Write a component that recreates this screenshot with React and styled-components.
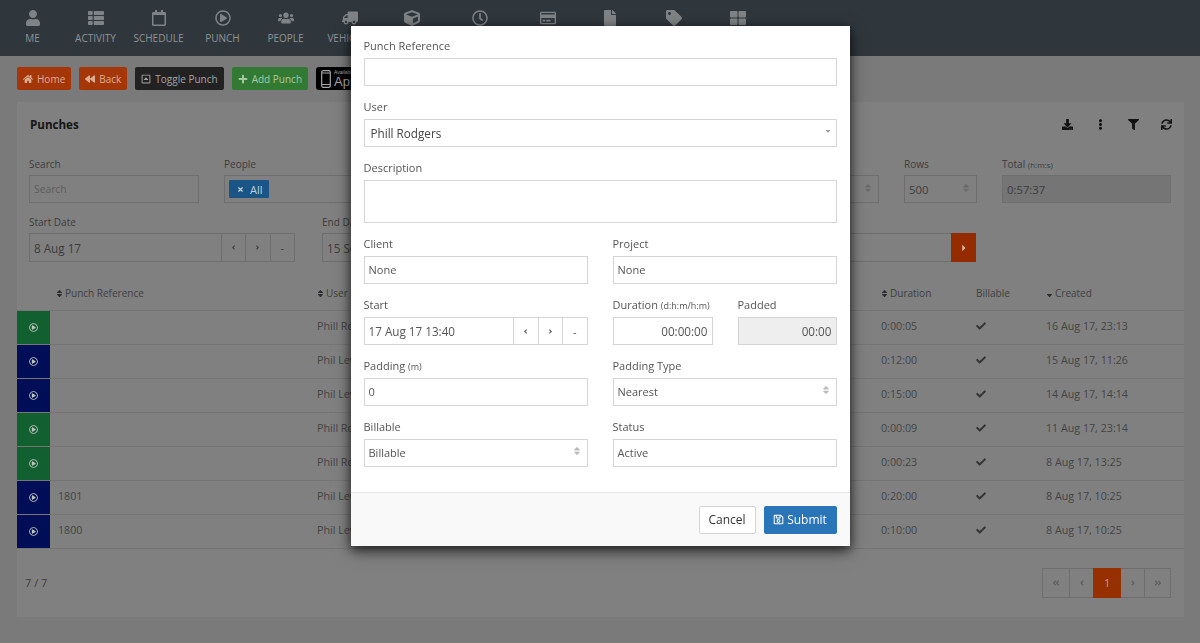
import React from "react";
import styled, { createGlobalStyle } from "styled-components";
import { FaUser, FaThList, FaRegCalendar, FaRegPlayCircle, FaUsers, FaTruck, FaCube, FaRegClock, FaRegCreditCard, FaFile, FaTag, FaThLarge, FaHome, FaBackward, FaPlus, FaDownload, FaEllipsisV, FaFilter, FaSync, FaCheck, FaSort, FaSortDown, FaTimes, FaCaretRight, FaCaretDown, FaRegSave, FaRegCaretSquareUp, FaAngleLeft, FaAngleRight, FaAngleDoubleLeft, FaAngleDoubleRight } from "react-icons/fa";

const Global = createGlobalStyle`
  html, body { margin: 0; padding: 0; height: 100%; background: #7a7a7a; overflow: hidden; }
  body { font-family: "Open Sans", "Liberation Sans", sans-serif; font-size: 11px; color: #444; }
  * { box-sizing: border-box; }
`;

const Page = styled.div`height: 643px; display: flex; flex-direction: column; overflow: hidden;`;
const Header = styled.header`height: 56px; flex: none; background: #2f373d; display: flex; padding-left: 1px;`;
const NavItem = styled.div`
  width: ${p => p.$w}px; flex: none; display: flex; flex-direction: column; align-items: center;
  color: #8f9396; font-size: 10px; padding-top: 10px; white-space: nowrap;
  svg { height: 16px; width: 16px; margin-bottom: 5px; display: block; color: #808385; transform: ${p => p.$flip ? "scaleX(-1)" : "none"}; }
`;
const Toolbar = styled.div`height: 46px; flex: none; padding: 11px 17px 0; display: flex; gap: 8px;`;
const Btn = styled.div`
  height: 23px; padding: 0 6px; border-radius: 2px; display: flex; align-items: center; gap: 4px;
  background: ${p => p.$bg}; color: ${p => p.$fg}; font-size: 10px; white-space: nowrap;
  svg { width: 10px; height: 10px; }
`;
const StoreBadge = styled.div`
  height: 23px; width: 90px; background: #000; border-radius: 3px; color: #a8a8a8; display: flex; align-items: center;
  padding-left: 5px; gap: 3px; overflow: hidden; flex: none;
`;
const StoreText = styled.div`
  display: flex; flex-direction: column; line-height: 1; font-size: 13px; white-space: nowrap;
  font-family: "Liberation Sans", sans-serif;
  small { font-size: 5px; }
`;
const Card = styled.section`
  margin: 0 17px; width: 1167px; height: 515px; background: #808080; flex: none; display: flex; flex-direction: column;
`;
const CardHead = styled.div`height: 51px; flex: none; padding: 0 12px 6px 13px; display: flex; align-items: center; justify-content: space-between;`;
const Title = styled.h2`font-size: 11.6px; font-weight: 700; margin: 0; color: #151515;`;
const Tools = styled.div`display: flex; gap: 22px; svg { width: 11px; height: 11px; color: #111; display: block; }`;
const FilterRow = styled.div`display: flex; flex: none; height: ${p => p.$h}px; padding: 4px 12px 0;`;
const Field = styled.div`width: ${p => p.$w}px; margin-left: ${p => p.$ml || 0}px; flex: none;`;
const FieldLabel = styled.div`font-size: 10px; height: 14px; line-height: 14px; color: #3c3c3c; margin-bottom: 4px; small { font-size: 8px; }`;
const BgInput = styled.div`
  height: 28px; border: 1px solid #6e6e6e; background: ${p => p.$gray ? "#757575" : "#808080"};
  display: flex; align-items: center; padding: 0 4px; font-size: ${p => p.$ph ? 10.3 : 11.3}px; color: ${p => p.$ph ? "#5c5c5c" : "#3c3c3c"};
  justify-content: space-between; overflow: hidden;
`;
const Tag = styled.span`
  height: 18px; width: 40px; padding: 0 8px; display: inline-flex; align-items: center; gap: 6px; background: #1b5586; color: #c0cfdb; font-size: 11px;
  border-radius: 1px; svg { width: 7px; height: 7px; flex: none; }
`;
const UpDown = styled(FaSort)`
  color: ${p => p.$page ? "#6b6b6b" : "#bbb"}; width: 8px; height: 10px; margin: -3px 2px 0 0;
`;
const DateGroup = styled.div`
  display: flex; height: ${p => p.$h}px; border: 1px solid ${p => p.$page ? "#6e6e6e" : "#d5d5d5"};
  font-size: 11.7px; color: ${p => p.$page ? "#3c3c3c" : "#555"}; align-items: stretch;
`;
const DateVal = styled.div`flex: 1; display: flex; align-items: center; padding-left: 4px; white-space: nowrap; overflow: hidden;`;
const DateBtn = styled.div`
  width: 24.5px; flex: none; border-left: 1px solid ${p => p.$page ? "#6e6e6e" : "#d5d5d5"}; display: flex; align-items: center; justify-content: center; font-size: 11px;
  svg { width: 7px; height: 7px; }
`;
const GoBtn = styled.div`
  width: 25px; flex: none; margin: -1px -1px -1px auto; background: #942c00; color: #ccb0a0; display: flex; align-items: center; justify-content: center;
  svg { width: 8px; height: 10px; }
`;
const TableHead = styled.div`display: flex; flex: none; height: 37px; padding-top: 2px; font-size: 10px; color: #3f3f3f; align-items: center; border-bottom: 1px solid #757575;`;
const Row = styled.div`display: flex; flex: none; height: 34px; border-bottom: 1px solid #757575; font-size: 10.7px; color: #444; align-items: center;`;
const PlayCell = styled.div`
  width: 33px; height: 33px; flex: none; background: ${p => p.$bg}; color: #bcc4c0; display: flex; align-items: center; justify-content: center;
  svg { width: 9px; height: 9px; }
`;
const Cell = styled.div`
  width: ${p => p.$w}px; flex: none; white-space: nowrap; padding-left: ${p => p.$pl || 0}px; padding-bottom: ${p => p.$pb || 0}px;
  display: flex; align-items: center; gap: 1px;
  svg.sort { width: 7px; height: 9px; margin-right: 1px; color: #2e2e2e; }
  svg.tick { width: 10px; height: 10px; color: #333; }
`;
const Footer = styled.div`flex: 1; display: flex; justify-content: space-between; align-items: center; padding: 0 13px 0 8px;`;
const Count = styled.div`font-size: 11px; color: #3c3c3c; padding-bottom: 2px;`;
const Pager = styled.div`display: flex; height: 30px;`;
const PageBtn = styled.div`
  width: ${p => p.$w}px; margin-left: ${p => p.$first ? 0 : -1}px; display: flex; align-items: center; justify-content: center; font-size: 10px;
  background: ${p => p.$active ? "#963000" : "#808080"}; color: ${p => p.$active ? "#d0a488" : "#5f5f5f"};
  border: 1px solid ${p => p.$active ? "#963000" : "#6e6e6e"}; position: relative; z-index: ${p => p.$active ? 1 : 0};
  svg { width: 8px; height: 8px; }
`;

const Backdrop = styled.div`position: fixed; inset: 0; display: flex; justify-content: center; align-items: flex-start;`;
const Modal = styled.div`
  width: 499px; margin-top: 26px; height: 520px; background: #fff; box-shadow: 0 3px 9px rgba(0,0,0,.5), 0 5px 15px rgba(0,0,0,.5);
  display: flex; flex-direction: column;
`;
const ModalBody = styled.div`flex: none; height: 466px; padding: 13px 13px 0; display: flex; flex-direction: column; gap: 14px;`;
const MField = styled.div`width: ${p => p.$w ? p.$w + "px" : "auto"}; flex: ${p => p.$w ? "none" : p.$grow ? "1 1 0" : "none"}; min-width: 0;`;
const MLabel = styled.div`font-size: 11px; height: 15px; line-height: 14px; color: #555; margin-bottom: 4px; white-space: nowrap; small { font-size: 9px; }`;
const MInput = styled.div`
  height: ${p => p.$h || 28}px; border: 1px solid #d5d5d5; background: ${p => p.$gray ? "#eee" : "#fff"}; color: #555;
  font-size: ${p => p.$right ? 11.7 : 11}px;
  display: flex; align-items: center; padding: 0 4px 1px; justify-content: ${p => p.$right ? "flex-end" : "space-between"};
`;
const MRow = styled.div`display: flex; gap: 25px; flex: none;`;
const MSplit = styled.div`flex: 1 1 0; min-width: 0; display: flex; gap: 25px;`;
const UserValue = styled.span`font-size: 11.7px; padding-left: 2px; color: #444;`;
const Caret = styled(FaCaretDown)`width: 8px; height: 8px; color: #999; margin-top: -3px;`;
const ModalFoot = styled.div`flex: 1; background: #f9f9f9; border-top: 1px solid #e5e5e5; display: flex; justify-content: flex-end; align-items: center; gap: 8px; padding: 0 13px;`;
const Cancel = styled.div`height: 28px; width: 57px; background: #fff; border: 1px solid #d5d5d5; border-radius: 2px; display: flex; align-items: center; justify-content: center; font-size: 12px; color: #333;`;
const Submit = styled.div`height: 28px; width: 73px; background: #2a75b8; border-radius: 2px; display: flex; align-items: center; justify-content: center; gap: 3px; font-size: 12px; color: #fff; svg { width: 11px; height: 11px; }`;

const nav = [
  [FaUser, "ME", 63], [FaThList, "ACTIVITY", 63], [FaRegCalendar, "SCHEDULE", 63], [FaRegPlayCircle, "PUNCH", 65], [FaUsers, "PEOPLE", 61], [FaTruck, "VEHICLES", 67],
  [FaCube, "ASSETS", 57], [FaRegClock, "TIME", 79], [FaRegCreditCard, "BILLING", 57], [FaFile, "FILES", 67], [FaTag, "TAGS", 61], [FaThLarge, "MORE", 67],
];
const GREEN = "#126030";
const BLUE = "#000e58";
const rows = [
  [GREEN, "", "Phill Rodgers", "0:00:05", "16 Aug 17, 23:13"],
  [BLUE, "", "Phil Lewis", "0:12:00", "15 Aug 17, 11:26"],
  [BLUE, "", "Phil Lewis", "0:15:00", "14 Aug 17, 14:14"],
  [GREEN, "", "Phill Rodgers", "0:00:09", "11 Aug 17, 23:14"],
  [GREEN, "", "Phill Rodgers", "0:00:23", "8 Aug 17, 13:25"],
  [BLUE, "1801", "Phil Lewis", "0:20:00", "8 Aug 17, 10:25"],
  [BLUE, "1800", "Phil Lewis", "0:10:00", "8 Aug 17, 10:25"],
];

const PhoneIcon = () => (
  <svg width="10" height="18" viewBox="0 0 10 18" fill="none" stroke="currentColor" style={{ flex: "none" }}>
    <rect x="0.7" y="0.7" width="8.6" height="16.6" rx="1.6" strokeWidth="1.2" />
    <path d="M1 3h8M1 14.5h8" strokeWidth="1" />
  </svg>
);

export default function App() {
  return (
    <>
      <Global />
      <Page>
        <Header>
          {nav.map(([I, t, w]) => <NavItem key={t} $w={w} $flip={t === "VEHICLES"}><I />{t}</NavItem>)}
        </Header>
        <Toolbar>
          <Btn $bg="#a43608" $fg="#dcae94"><FaHome />Home</Btn>
          <Btn $bg="#a43608" $fg="#dcae94"><FaBackward />Back</Btn>
          <Btn $bg="#222222" $fg="#a5a5a5"><FaRegCaretSquareUp />Toggle Punch</Btn>
          <Btn $bg="#327a34" $fg="#a8c8a8"><FaPlus />Add Punch</Btn>
          <StoreBadge><PhoneIcon /><StoreText><small>Available on the</small>App Store</StoreText></StoreBadge>
        </Toolbar>
        <Card>
          <CardHead>
            <Title>Punches</Title>
            <Tools><FaDownload /><FaEllipsisV /><FaFilter /><FaSync /></Tools>
          </CardHead>
          <FilterRow $h={58}>
            <Field $w={170}><FieldLabel>Search</FieldLabel><BgInput $ph>Search</BgInput></Field>
            <Field $w={460} $ml={25}><FieldLabel>People</FieldLabel><BgInput><Tag><FaTimes />All</Tag></BgInput></Field>
            <Field $w={170} $ml={25}><FieldLabel>Status</FieldLabel><BgInput><span /><UpDown $page /></BgInput></Field>
            <Field $w={73} $ml={25}><FieldLabel>Rows</FieldLabel><BgInput>500<UpDown $page /></BgInput></Field>
            <Field $w={169} $ml={25}><FieldLabel>Total <small>(h:m:s)</small></FieldLabel><BgInput $gray>0:57:37</BgInput></Field>
          </FilterRow>
          <FilterRow $h={63}>
            <Field $w={266}><FieldLabel>Start Date</FieldLabel>
              <DateGroup $page $h={29}><DateVal>8 Aug 17</DateVal><DateBtn $page><FaAngleLeft /></DateBtn><DateBtn $page><FaAngleRight /></DateBtn><DateBtn $page>-</DateBtn></DateGroup>
            </Field>
            <Field $w={654} $ml={27}><FieldLabel>End Date</FieldLabel>
              <DateGroup $page $h={29}><DateVal>15 Sep 17</DateVal><GoBtn><FaCaretRight /></GoBtn></DateGroup>
            </Field>
          </FilterRow>
          <TableHead>
            <Cell $w={300} $pl={39}><FaSort className="sort" />Punch Reference</Cell>
            <Cell $w={564}><FaSort className="sort" />User</Cell>
            <Cell $w={95}><FaSort className="sort" />Duration</Cell>
            <Cell $w={70}>Billable</Cell>
            <Cell $w={137}><FaSortDown className="sort" />Created</Cell>
          </TableHead>
          {rows.map((r, i) => (
            <Row key={i}>
              <PlayCell $bg={r[0]}><FaRegPlayCircle /></PlayCell>
              <Cell $w={267} $pl={8} $pb={3}>{r[1]}</Cell>
              <Cell $w={564} $pb={3}>{r[2]}</Cell>
              <Cell $w={95} $pb={3}>{r[3]}</Cell>
              <Cell $w={70} $pb={3}><FaCheck className="tick" /></Cell>
              <Cell $w={137} $pb={3}>{r[4]}</Cell>
            </Row>
          ))}
          <Footer>
            <Count>7 / 7</Count>
            <Pager>
              <PageBtn $first $w={28}><FaAngleDoubleLeft /></PageBtn>
              <PageBtn $w={25}><FaAngleLeft /></PageBtn>
              <PageBtn $active $w={28}>1</PageBtn>
              <PageBtn $w={25}><FaAngleRight /></PageBtn>
              <PageBtn $w={27}><FaAngleDoubleRight /></PageBtn>
            </Pager>
          </Footer>
        </Card>
      </Page>
      <Backdrop>
        <Modal>
          <ModalBody>
            <MField><MLabel>Punch Reference</MLabel><MInput /></MField>
            <MField><MLabel>User</MLabel><MInput><UserValue>Phill Rodgers</UserValue><Caret /></MInput></MField>
            <MField><MLabel>Description</MLabel><MInput $h={43} /></MField>
            <MRow>
              <MField $grow><MLabel>Client</MLabel><MInput>None</MInput></MField>
              <MField $grow><MLabel>Project</MLabel><MInput>None</MInput></MField>
            </MRow>
            <MRow>
              <MField $grow><MLabel>Start</MLabel>
                <DateGroup $h={28}><DateVal>17 Aug 17 13:40</DateVal><DateBtn><FaAngleLeft /></DateBtn><DateBtn><FaAngleRight /></DateBtn><DateBtn>-</DateBtn></DateGroup>
              </MField>
              <MSplit>
                <MField $w={100}><MLabel>Duration <small>(d:h:m/h:m)</small></MLabel><MInput $right>00:00:00</MInput></MField>
                <MField $grow><MLabel>Padded</MLabel><MInput $right $gray>00:00</MInput></MField>
              </MSplit>
            </MRow>
            <MRow>
              <MField $grow><MLabel>Padding <small>(m)</small></MLabel><MInput>0</MInput></MField>
              <MField $grow><MLabel>Padding Type</MLabel><MInput>Nearest<UpDown /></MInput></MField>
            </MRow>
            <MRow>
              <MField $grow><MLabel>Billable</MLabel><MInput>Billable<UpDown /></MInput></MField>
              <MField $grow><MLabel>Status</MLabel><MInput>Active</MInput></MField>
            </MRow>
          </ModalBody>
          <ModalFoot>
            <Cancel>Cancel</Cancel>
            <Submit><FaRegSave />Submit</Submit>
          </ModalFoot>
        </Modal>
      </Backdrop>
    </>
  );
}
